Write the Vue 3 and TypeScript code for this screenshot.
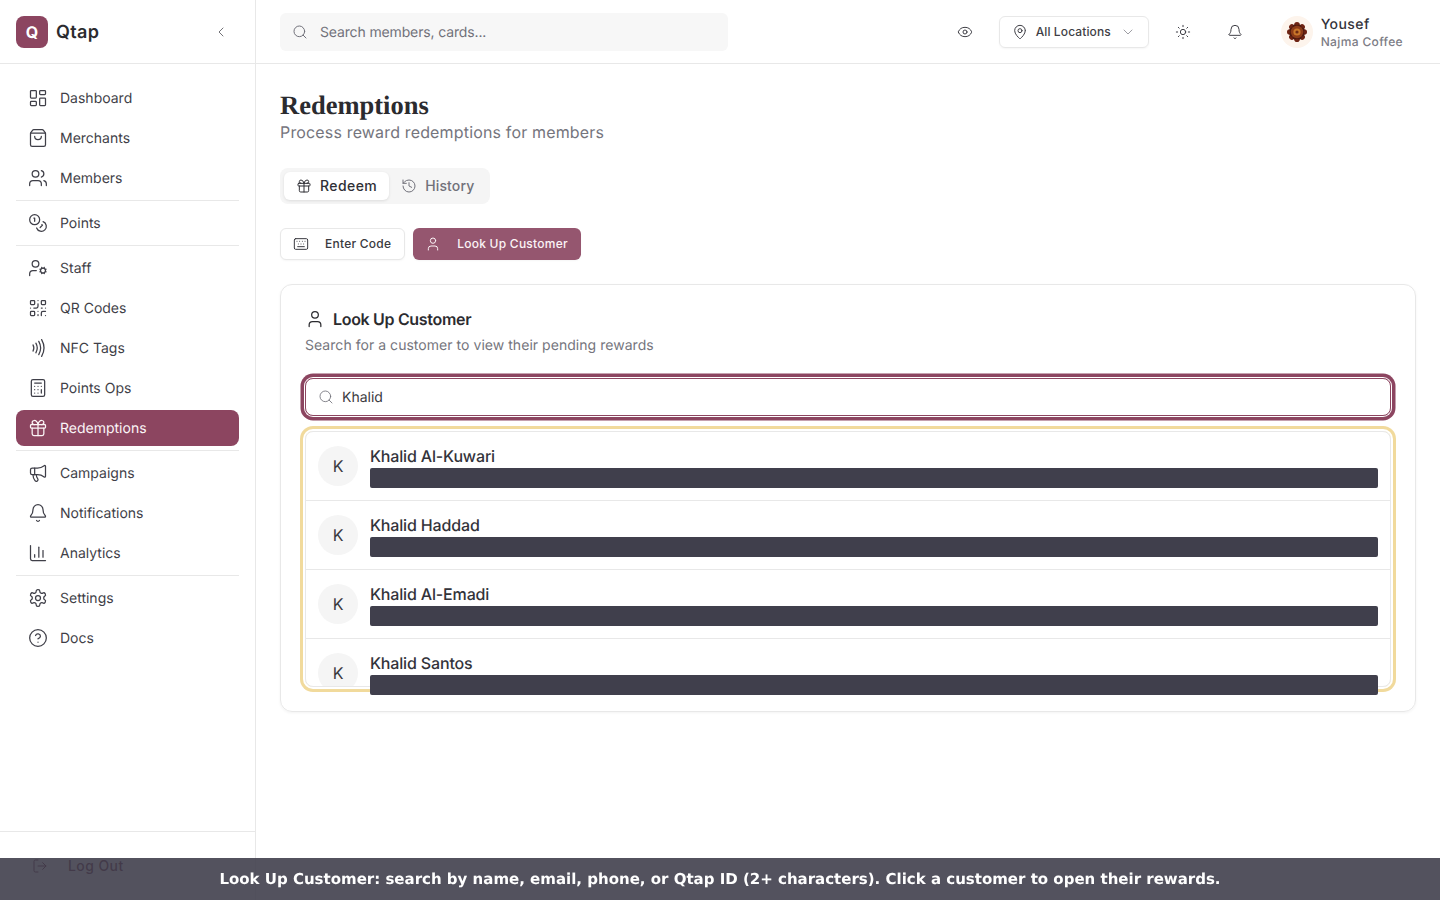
<script setup lang="ts">
const I: Record<string, string> = {
  dashboard: '<rect width="7" height="9" x="3" y="3" rx="1"/><rect width="7" height="5" x="14" y="3" rx="1"/><rect width="7" height="9" x="14" y="12" rx="1"/><rect width="7" height="5" x="3" y="16" rx="1"/>',
  bag: '<path d="M16 10a4 4 0 0 1-8 0"/><path d="M3.103 6.034h17.794"/><path d="M3.4 5.467a2 2 0 0 0-.4 1.2V20a2 2 0 0 0 2 2h14a2 2 0 0 0 2-2V6.667a2 2 0 0 0-.4-1.2l-2-2.667A2 2 0 0 0 17 2H7a2 2 0 0 0-1.6.8z"/>',
  users: '<path d="M16 21v-2a4 4 0 0 0-4-4H6a4 4 0 0 0-4 4v2"/><circle cx="9" cy="7" r="4"/><path d="M22 21v-2a4 4 0 0 0-3-3.87"/><path d="M16 3.13a4 4 0 0 1 0 7.75"/>',
  coins: '<circle cx="8" cy="8" r="6"/><path d="M18.09 10.37A6 6 0 1 1 10.34 18"/><path d="M7 6h1v4"/><path d="m16.71 13.88.7.71-2.82 2.82"/>',
  usercog: '<path d="M10 15H6a4 4 0 0 0-4 4v2"/><path d="m14.305 16.53.923-.382"/><path d="m15.228 13.852-.923-.383"/><path d="m16.852 12.228-.383-.923"/><path d="m16.852 17.772-.383.924"/><path d="m19.148 12.228.383-.923"/><path d="m19.53 18.696-.382-.924"/><path d="m20.772 13.852.924-.383"/><path d="m20.772 16.148.924.383"/><circle cx="18" cy="15" r="3"/><circle cx="9" cy="7" r="4"/>',
  qr: '<rect width="5" height="5" x="3" y="3" rx="1"/><rect width="5" height="5" x="16" y="3" rx="1"/><rect width="5" height="5" x="3" y="16" rx="1"/><path d="M21 16h-3a2 2 0 0 0-2 2v3"/><path d="M21 21v.01"/><path d="M12 7v3a2 2 0 0 1-2 2H7"/><path d="M3 12h.01"/><path d="M12 3h.01"/><path d="M12 16v.01"/><path d="M16 12h1"/><path d="M21 12v.01"/><path d="M12 21v-1"/>',
  nfc: '<path d="M6 8.32a7.43 7.43 0 0 1 0 7.36"/><path d="M9.46 6.21a11.76 11.76 0 0 1 0 11.58"/><path d="M12.91 4.1a15.91 15.91 0 0 1 .01 15.8"/><path d="M16.37 2a20.16 20.16 0 0 1 0 20"/>',
  calc: '<rect width="16" height="20" x="4" y="2" rx="2"/><line x1="8" x2="16" y1="6" y2="6"/><line x1="16" x2="16" y1="14" y2="18"/><path d="M16 10h.01"/><path d="M12 10h.01"/><path d="M8 10h.01"/><path d="M12 14h.01"/><path d="M8 14h.01"/><path d="M12 18h.01"/><path d="M8 18h.01"/>',
  gift: '<rect x="3" y="8" width="18" height="4" rx="1"/><path d="M12 8v13"/><path d="M19 12v7a2 2 0 0 1-2 2H7a2 2 0 0 1-2-2v-7"/><path d="M7.5 8a2.5 2.5 0 0 1 0-5A4.8 8 0 0 1 12 8a4.8 8 0 0 1 4.5-5 2.5 2.5 0 0 1 0 5"/>',
  megaphone: '<path d="M11 6a13 13 0 0 0 8.4-2.8A1 1 0 0 1 21 4v12a1 1 0 0 1-1.6.8A13 13 0 0 0 11 14H5a2 2 0 0 1-2-2V8a2 2 0 0 1 2-2z"/><path d="M6 14a12 12 0 0 0 2.4 7.2 2 2 0 0 0 3.2-2.4A8 8 0 0 1 10 14"/><path d="M8 6v8"/>',
  bell: '<path d="M10.268 21a2 2 0 0 0 3.464 0"/><path d="M3.262 15.326A1 1 0 0 0 4 17h16a1 1 0 0 0 .74-1.673C19.41 13.956 18 12.499 18 8A6 6 0 0 0 6 8c0 4.499-1.411 5.956-2.738 7.326"/>',
  chart: '<path d="M3 3v16a2 2 0 0 0 2 2h16"/><path d="M18 17V9"/><path d="M13 17V5"/><path d="M8 17v-3"/>',
  settings: '<path d="M12.22 2h-.44a2 2 0 0 0-2 2v.18a2 2 0 0 1-1 1.73l-.43.25a2 2 0 0 1-2 0l-.15-.08a2 2 0 0 0-2.73.73l-.22.38a2 2 0 0 0 .73 2.73l.15.1a2 2 0 0 1 1 1.72v.51a2 2 0 0 1-1 1.74l-.15.09a2 2 0 0 0-.73 2.73l.22.38a2 2 0 0 0 2.73.73l.15-.08a2 2 0 0 1 2 0l.43.25a2 2 0 0 1 1 1.73V20a2 2 0 0 0 2 2h.44a2 2 0 0 0 2-2v-.18a2 2 0 0 1 1-1.73l.43-.25a2 2 0 0 1 2 0l.15.08a2 2 0 0 0 2.73-.73l.22-.39a2 2 0 0 0-.73-2.73l-.15-.08a2 2 0 0 1-1-1.74v-.5a2 2 0 0 1 1-1.74l.15-.09a2 2 0 0 0 .73-2.73l-.22-.38a2 2 0 0 0-2.73-.73l-.15.08a2 2 0 0 1-2 0l-.43-.25a2 2 0 0 1-1-1.73V4a2 2 0 0 0-2-2z"/><circle cx="12" cy="12" r="3"/>',
  help: '<circle cx="12" cy="12" r="10"/><path d="M9.09 9a3 3 0 0 1 5.83 1c0 2-3 3-3 3"/><path d="M12 17h.01"/>',
  logout: '<path d="m16 17 5-5-5-5"/><path d="M21 12H9"/><path d="M9 21H5a2 2 0 0 1-2-2V5a2 2 0 0 1 2-2h4"/>',
  search: '<path d="m21 21-4.34-4.34"/><circle cx="11" cy="11" r="8"/>',
  eye: '<path d="M2.062 12.348a1 1 0 0 1 0-.696 10.75 10.75 0 0 1 19.876 0 1 1 0 0 1 0 .696 10.75 10.75 0 0 1-19.876 0"/><circle cx="12" cy="12" r="3"/>',
  pin: '<path d="M20 10c0 4.993-5.539 10.193-7.399 11.799a1 1 0 0 1-1.202 0C9.539 20.193 4 14.993 4 10a8 8 0 0 1 16 0"/><circle cx="12" cy="10" r="3"/>',
  down: '<path d="m6 9 6 6 6-6"/>',
  left: '<path d="m15 18-6-6 6-6"/>',
  sun: '<circle cx="12" cy="12" r="4"/><path d="M12 2v2"/><path d="M12 20v2"/><path d="m4.93 4.93 1.41 1.41"/><path d="m17.66 17.66 1.41 1.41"/><path d="M2 12h2"/><path d="M20 12h2"/><path d="m6.34 17.66-1.41 1.41"/><path d="m19.07 4.93-1.41 1.41"/>',
  history: '<path d="M3 12a9 9 0 1 0 9-9 9.75 9.75 0 0 0-6.74 2.74L3 8"/><path d="M3 3v5h5"/><path d="M12 7v5l4 2"/>',
  keyboard: '<path d="M10 8h.01"/><path d="M12 12h.01"/><path d="M14 8h.01"/><path d="M16 12h.01"/><path d="M18 8h.01"/><path d="M6 8h.01"/><path d="M7 16h10"/><path d="M8 12h.01"/><rect width="20" height="16" x="2" y="4" rx="2"/>',
  user: '<path d="M19 21v-2a4 4 0 0 0-4-4H9a4 4 0 0 0-4 4v2"/><circle cx="12" cy="7" r="4"/>',
}

const navGroups = [
  [['dashboard', 'Dashboard'], ['bag', 'Merchants'], ['users', 'Members']],
  [['coins', 'Points']],
  [['usercog', 'Staff'], ['qr', 'QR Codes'], ['nfc', 'NFC Tags'], ['calc', 'Points Ops'], ['gift', 'Redemptions']],
  [['megaphone', 'Campaigns'], ['bell', 'Notifications'], ['chart', 'Analytics']],
  [['settings', 'Settings'], ['help', 'Docs']],
]
const customers = ['Khalid Al-Kuwari', 'Khalid Haddad', 'Khalid Al-Emadi', 'Khalid Santos']
const petals = [0, 45, 90, 135, 180, 225, 270, 315]
</script>

<template>
  <div class="app">
    <aside class="side">
      <div class="brand">
        <span class="logo">Q</span>
        <span class="brand-name">Qtap</span>
        <svg class="ic ic16 collapse" viewBox="0 0 24 24" v-html="I.left"></svg>
      </div>
      <nav class="nav">
        <template v-for="(group, g) in navGroups" :key="g">
          <hr v-if="g > 0" class="sep" />
          <a v-for="item in group" :key="item[1]" class="nav-item" :class="{ active: item[1] === 'Redemptions' }">
            <svg class="ic ic20" viewBox="0 0 24 24" v-html="I[item[0]]"></svg>
            <span>{{ item[1] }}</span>
          </a>
        </template>
      </nav>
      <div class="side-foot">
        <button class="logout">
          <svg class="ic ic16" viewBox="0 0 24 24" v-html="I.logout"></svg>
          <span>Log Out</span>
        </button>
      </div>
    </aside>

    <div class="page">
      <header class="top">
        <div class="top-search">
          <svg class="ic ic16" viewBox="0 0 24 24" v-html="I.search"></svg>
          <span>Search members, cards...</span>
        </div>
        <div class="top-right">
          <button class="icon-btn"><svg class="ic ic16" viewBox="0 0 24 24" v-html="I.eye"></svg></button>
          <button class="loc">
            <svg class="ic ic16" viewBox="0 0 24 24" v-html="I.pin"></svg>
            <span>All Locations</span>
            <svg class="ic ic16 loc-chev" viewBox="0 0 24 24" v-html="I.down"></svg>
          </button>
          <button class="icon-btn"><svg class="ic ic16" viewBox="0 0 24 24" v-html="I.sun"></svg></button>
          <button class="icon-btn"><svg class="ic ic16" viewBox="0 0 24 24" v-html="I.bell"></svg></button>
          <div class="me">
            <span class="avatar">
              <svg viewBox="0 0 32 32" class="mandala">
                <circle cx="16" cy="16" r="16" fill="#fdf4ec" />
                <g v-for="a in petals" :key="a" :transform="`rotate(${a} 16 16)`">
                  <circle cx="16" cy="8.8" r="2.8" fill="#6f2414" />
                </g>
                <g v-for="a in petals" :key="'b' + a" :transform="`rotate(${a + 22.5} 16 16)`">
                  <circle cx="16" cy="10.5" r="2.4" fill="#4f1a10" />
                </g>
                <circle cx="16" cy="16" r="6.2" fill="#8e3c18" />
                <circle cx="16" cy="16" r="3.6" fill="#c9762a" />
                <circle cx="16" cy="16" r="1.6" fill="#6e2a12" />
              </svg>
            </span>
            <span class="me-text">
              <span class="me-name">Yousef</span>
              <span class="me-org">Najma Coffee</span>
            </span>
          </div>
        </div>
      </header>

      <main class="main">
        <div class="head">
          <h1>Redemptions</h1>
          <p>Process reward redemptions for members</p>
        </div>

        <div class="tabs">
          <button class="tab on"><svg class="ic ic16" viewBox="0 0 24 24" v-html="I.gift"></svg><span>Redeem</span></button>
          <button class="tab hist"><svg class="ic ic16" viewBox="0 0 24 24" v-html="I.history"></svg><span>History</span></button>
        </div>

        <div class="modes">
          <button class="mode"><svg class="ic ic16" viewBox="0 0 24 24" v-html="I.keyboard"></svg><span>Enter Code</span></button>
          <button class="mode sel"><svg class="ic ic16" viewBox="0 0 24 24" v-html="I.user"></svg><span>Look Up Customer</span></button>
        </div>

        <section class="card">
          <h2><svg class="ic ic20 dark" viewBox="0 0 24 24" v-html="I.user"></svg>Look Up Customer</h2>
          <p class="sub">Search for a customer to view their pending rewards</p>
          <div class="field">
            <svg class="ic ic16" viewBox="0 0 24 24" v-html="I.search"></svg>
            <span>Khalid</span>
          </div>
          <ul class="list">
            <li v-for="(c, i) in customers" :key="c" class="row">
              <span class="av-clip" :class="{ cut: i === 3 }"><span class="av">K</span></span>
              <div class="row-text">
                <div class="row-name">{{ c }}</div>
                <div class="bar"></div>
              </div>
            </li>
          </ul>
        </section>
      </main>
    </div>

    <div class="banner">Look Up Customer: search by name, email, phone, or Qtap ID (2+ characters). Click a customer to open their rewards.</div>
  </div>
</template>

<style>
html, body { margin: 0; background: #fff; }
</style>

<style scoped>
* { box-sizing: border-box; }
.app {
  display: grid;
  grid-template-columns: 256px 1fr;
  height: 900px;
  overflow: hidden;
  font-family: Inter, "Liberation Sans", sans-serif;
  color: #27272a;
  background: #fff;
  text-rendering: geometricPrecision;
}
button { font: inherit; background: none; border: 0; padding: 0; color: inherit; }
.ic { fill: none; stroke: currentColor; stroke-width: 1.5; stroke-linecap: round; stroke-linejoin: round; flex: none; display: block; }
.ic16 { width: 16px; height: 16px; }
.ic20 { width: 20px; height: 20px; }

.side { display: flex; flex-direction: column; border-right: 1px solid #e8e8e8; height: 900px; }
.brand { height: 64px; flex: none; display: flex; align-items: center; gap: 8px; padding: 0 16px; border-bottom: 1px solid #e8e8e8; }
.logo { width: 32px; height: 32px; border-radius: 8px; background: #8c4560; color: #fff; font-weight: 700; font-size: 16px; display: flex; align-items: center; justify-content: center; }
.brand-name { font-size: 18px; font-weight: 600; color: #2b2b2f; letter-spacing: 0.02em; padding-top: 1px; }
.collapse { margin-left: auto; margin-right: 10px; color: #55555c; stroke-width: 1.25; }
.nav { flex: 1; padding: 16px 16px 0; display: flex; flex-direction: column; gap: 4px; }
.sep { margin: 0; border: 0; height: 1px; background: #e8e8e8; }
.nav-item { height: 36px; display: flex; align-items: center; gap: 12px; padding: 0 12px; border-radius: 8px; font-size: 14px; color: #3f3f48; }
.nav-item.active { background: #8c4560; color: #fbf5f7; }
.side-foot { height: 69px; flex: none; border-top: 1px solid #e8e8e8; padding: 16px; }
.logout { height: 36px; width: 100%; display: flex; align-items: center; gap: 20px; padding: 0 16px; font-size: 14px; font-weight: 500; color: #5a0f30; letter-spacing: 0.03em; }
.logout span { margin-top: -1px; }

.page { min-width: 0; display: flex; flex-direction: column; }
.top { height: 64px; flex: none; border-bottom: 1px solid #e8e8e8; display: flex; align-items: center; padding: 0 24px; }
.top-search { width: 448px; height: 38px; border-radius: 6px; background: #f7f7f7; display: flex; align-items: center; gap: 12px; padding: 0 12px; font-size: 14px; color: #71717a; letter-spacing: -0.01em; }
.top-search span { padding-top: 1px; }
.top-right { margin-left: auto; display: flex; align-items: center; gap: 16px; color: #3f3f46; }
.icon-btn { width: 36px; height: 36px; display: flex; align-items: center; justify-content: center; }
.loc { width: 150px; height: 32px; border: 1px solid #e8e8e8; border-radius: 6px; display: flex; align-items: center; gap: 8px; padding: 0 12px; font-size: 12px; font-weight: 500; letter-spacing: 0.01em; box-shadow: 0 1px 2px rgba(0,0,0,.04); }
.loc-chev { margin-left: auto; color: #8a8a92; stroke-width: 1.25; }
.me { display: flex; align-items: center; gap: 8px; padding: 0 13px 0 12px; }
.avatar { width: 32px; height: 32px; display: block; }
.mandala { width: 32px; height: 32px; display: block; }
.me-text { display: flex; flex-direction: column; padding-top: 1px; }
.me-name { font-size: 14px; font-weight: 500; line-height: 19px; letter-spacing: 0.03em; color: #33333a; }
.me-org { font-size: 12px; font-weight: 500; line-height: 16px; letter-spacing: 0.03em; color: #7c7c85; }

.main { padding: 24px; display: flex; flex-direction: column; align-items: flex-start; gap: 24px; }
.head { padding-bottom: 2px; }
.head h1 { margin: 0; font-family: "Liberation Serif", serif; font-size: 26.5px; font-weight: 700; line-height: 34px; color: #2b2b2f; }
.head p { margin: 0; font-size: 16px; line-height: 20px; color: #75757d; letter-spacing: 0.01em; }
.tabs { display: flex; padding: 4px; background: #f5f5f5; border-radius: 8px; height: 36px; }
.tab { height: 28px; padding: 0 12px; display: flex; align-items: center; gap: 8px; font-size: 14px; font-weight: 500; letter-spacing: 0.03em; color: #71717a; border-radius: 6px; }
.tab span { margin-top: -1px; }
.tab.hist { letter-spacing: 0.01em; padding-right: 12px; }
.tab.on { background: #fff; color: #2f2f35; box-shadow: 0 1px 3px rgba(0,0,0,.1); }
.modes { display: flex; gap: 8px; }
.mode { height: 32px; padding: 0 13px 0 12px; display: flex; align-items: center; gap: 16px; font-size: 12px; font-weight: 500; letter-spacing: 0.02em; border-radius: 6px; border: 1px solid #e8e8e8; background: #fff; color: #3a3a40; box-shadow: 0 1px 2px rgba(0,0,0,.04); }
.mode span { margin-top: -1px; }
.mode.sel { background: #95566f; border: 0; color: #fbf3f6; }
.card { width: 100%; height: 428px; border: 1px solid #e8e8e8; border-radius: 12px; padding: 24px; box-shadow: 0 1px 3px rgba(0,0,0,.05); }
.card h2 { margin: 0; display: flex; align-items: center; gap: 8px; font-size: 16px; line-height: 20px; font-weight: 600; color: #2b2b2f; letter-spacing: -0.02em; }
.dark { color: #2b2b2f; }
.sub { margin: 7px 0 0; font-size: 14px; line-height: 20px; color: #75757d; letter-spacing: 0.04px; }
.field { margin-top: 22px; height: 38px; border: 1px solid #8c4560; border-radius: 8px; display: flex; align-items: center; gap: 8px; padding: 0 12px; font-size: 14px; color: #3a3a40; box-shadow: 0 0 0 1px #fff, 0 0 0 4.5px #8c4560; }
.field .ic { color: #6f6f77; stroke-width: 1.25; }
.list { list-style: none; margin: 15px 0 0; padding: 0; height: 256px; border: 1px solid #e8e8e8; border-radius: 8px; box-shadow: 0 0 0 2px #fff, 0 0 0 5px #f1da9c; }
.row { display: flex; gap: 12px; padding: 13px 12px; height: 69px; border-bottom: 1px solid #e8e8e8; }
.row:last-child { border-bottom: 0; }
.av-clip { width: 40px; flex: none; display: block; overflow: hidden; padding-top: 1px; }
.av-clip.cut { height: 34px; }
.av { width: 40px; height: 40px; border-radius: 50%; background: #f5f5f5; display: flex; align-items: center; justify-content: center; font-size: 16px; color: #3a3a40; }
.row-text { flex: 1; min-width: 0; padding-top: 1px; }
.row-name { font-size: 16px; line-height: 20px; font-weight: 500; color: #33333a; letter-spacing: -0.01em; }
.bar { margin-top: 2px; height: 20px; background: #403f4c; border-radius: 2px; position: relative; }

.banner {
  position: fixed; left: 0; right: 0; bottom: 0; height: 42px;
  display: flex; align-items: center; justify-content: center;
  padding-bottom: 1px;
  background: rgba(64, 63, 76, .9);
  color: #fff;
  font-family: "DejaVu Sans", sans-serif;
  font-size: 15px; font-weight: 700;
}
</style>
